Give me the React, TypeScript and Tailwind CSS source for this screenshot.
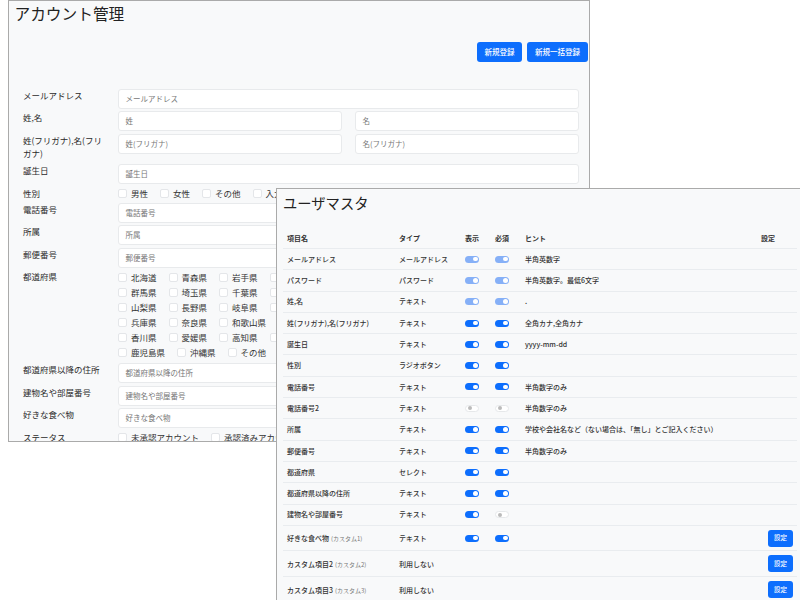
import React from 'react';

const jp = { fontFamily: '"Noto Sans CJK JP", "Noto Sans", sans-serif' };

const prefectures = [
  ['北海道', '青森県', '岩手県', '宮城県', '秋田県', '山形県', '福島県', '茨城県', '栃木県'],
  ['群馬県', '埼玉県', '千葉県', '東京都', '神奈川県', '新潟県', '富山県', '石川県', '福井県'],
  ['山梨県', '長野県', '岐阜県', '静岡県', '愛知県', '三重県', '滋賀県', '京都府', '大阪府'],
  ['兵庫県', '奈良県', '和歌山県', '鳥取県', '島根県', '岡山県', '広島県', '山口県', '徳島県'],
  ['香川県', '愛媛県', '高知県', '福岡県', '佐賀県', '長崎県', '熊本県', '大分県', '宮崎県'],
  ['鹿児島県', '沖縄県', 'その他'],
];

type Sw = 'on' | 'locked' | 'off' | null;

interface MasterRow {
  name: string;
  custom?: string;
  type: string;
  show: Sw;
  required: Sw;
  hint?: string;
  action?: boolean;
}

const masterRows: MasterRow[] = [
  { name: 'メールアドレス', type: 'メールアドレス', show: 'locked', required: 'locked', hint: '半角英数字' },
  { name: 'パスワード', type: 'パスワード', show: 'locked', required: 'locked', hint: '半角英数字。最低6文字' },
  { name: '姓,名', type: 'テキスト', show: 'locked', required: 'locked', hint: '.' },
  { name: '姓(フリガナ),名(フリガナ)', type: 'テキスト', show: 'on', required: 'on', hint: '全角カナ,全角カナ' },
  { name: '誕生日', type: 'テキスト', show: 'on', required: 'on', hint: 'yyyy-mm-dd' },
  { name: '性別', type: 'ラジオボタン', show: 'on', required: 'on' },
  { name: '電話番号', type: 'テキスト', show: 'on', required: 'on', hint: '半角数字のみ' },
  { name: '電話番号2', type: 'テキスト', show: 'off', required: 'off', hint: '半角数字のみ' },
  { name: '所属', type: 'テキスト', show: 'on', required: 'on', hint: '学校や会社名など（ない場合は、「無し」とご記入ください）' },
  { name: '郵便番号', type: 'テキスト', show: 'on', required: 'on', hint: '半角数字のみ' },
  { name: '都道府県', type: 'セレクト', show: 'on', required: 'on' },
  { name: '都道府県以降の住所', type: 'テキスト', show: 'on', required: 'on' },
  { name: '建物名や部屋番号', type: 'テキスト', show: 'on', required: 'off' },
  { name: '好きな食べ物', custom: '(カスタム1)', type: 'テキスト', show: 'on', required: 'on', action: true },
  { name: 'カスタム項目2', custom: '(カスタム2)', type: '利用しない', show: null, required: null, action: true },
  { name: 'カスタム項目3', custom: '(カスタム3)', type: '利用しない', show: null, required: null, action: true },
];

const Field = ({ placeholder, className = '' }: { placeholder: string; className?: string }) => (
  <div className={`h-[20px] flex-1 flex items-center rounded-[3px] border border-[#e8eaec] bg-white pl-[6.5px] text-[7.5px] text-[#777] ${className}`}>
    {placeholder}
  </div>
);

const Check = ({ label }: { label: string }) => (
  <span className="mr-[12px] flex shrink-0 items-center gap-[4px] whitespace-nowrap">
    <span className="h-[9px] w-[9px] rounded-[2px] border border-[#e4e6e9] bg-white" />
    {label}
  </span>
);

const Row = ({ label, children, className = '' }: { label: string; children: React.ReactNode; className?: string }) => (
  <div className={`mb-[2.5px] flex ${className}`}>
    <div className="w-[95px] shrink-0 pr-[8px] text-[8.5px] leading-[13px] text-[#2b2b2b]">{label}</div>
    <div className="flex flex-1 gap-[13px]">{children}</div>
  </div>
);

const Toggle = ({ state }: { state: Sw }) => {
  if (!state) return null;
  if (state === 'off') {
    return (
      <span className="flex h-[7px] w-[14px] items-center rounded-full border border-[#e6e8ea] bg-white pl-[2px]">
        <span className="h-[4px] w-[4px] rounded-full bg-[#bbb]" />
      </span>
    );
  }
  return (
    <span className={`flex h-[7px] w-[14px] items-center justify-end rounded-full pr-[1.5px] ${state === 'on' ? 'bg-[#0d6efd]' : 'bg-[#86b0f7]'}`}>
      <span className="h-[4.5px] w-[4.5px] rounded-full bg-white" />
    </span>
  );
};

const gridCols = 'grid grid-cols-[112px_66px_30px_30px_236px_36px] items-center pl-[4px]';

export default function App() {
  return (
    <div className="relative h-[600px] w-[800px] overflow-hidden bg-white text-[#333]" style={jp}>
      {/* 後ろのウィンドウ */}
      <section className="absolute left-[8px] top-0 h-[442px] w-[582px] overflow-hidden border border-[#aaa] bg-[#f8f9fa] pl-[14px] pr-[10px]">
        <h1 className="-ml-[8.5px] mt-[1.5px] h-[22px] text-[15.7px] leading-[22px] text-[#222]">アカウント管理</h1>
        <div className="-mr-[9px] mt-[17.5px] flex justify-end gap-[5px]">
          <button className="h-[20px] w-[45px] rounded-[3px] bg-[#0d6efd] text-[7.5px] font-medium text-white">新規登録</button>
          <button className="h-[20px] w-[61px] rounded-[3px] bg-[#0d6efd] text-[7.5px] font-medium text-white">新規一括登録</button>
        </div>
        <div className="mt-[26.5px]">
          <Row label="メールアドレス"><Field placeholder="メールアドレス" /></Row>
          <Row label="姓,名"><Field placeholder="姓" /><Field placeholder="名" /></Row>
          <Row label="姓(フリガナ),名(フリガナ)" className="mb-[2px] h-[28px]"><Field placeholder="姓(フリガナ)" /><Field placeholder="名(フリガナ)" /></Row>
          <Row label="誕生日"><Field placeholder="誕生日" /></Row>
          <Row label="性別" className="h-[14px] items-center">
            <div className="flex text-[8.5px]">
              <Check label="男性" /><Check label="女性" /><Check label="その他" /><Check label="入力しない" />
            </div>
          </Row>
          <Row label="電話番号" className="mt-[1px]"><Field placeholder="電話番号" /></Row>
          <Row label="所属"><Field placeholder="所属" /></Row>
          <Row label="郵便番号"><Field placeholder="郵便番号" /></Row>
          <Row label="都道府県" className="mb-[3px]">
            <div className="flex flex-col text-[8.5px] leading-[15px]">
              {prefectures.map((line, i) => (
                <div key={i} className="flex h-[15px]">
                  {line.map((p) => <Check key={p} label={p} />)}
                </div>
              ))}
            </div>
          </Row>
          <Row label="都道府県以降の住所"><Field placeholder="都道府県以降の住所" /></Row>
          <Row label="建物名や部屋番号"><Field placeholder="建物名や部屋番号" /></Row>
          <Row label="好きな食べ物"><Field placeholder="好きな食べ物" /></Row>
          <Row label="ステータス" className="h-[14px]">
            <div className="flex text-[8.5px]">
              <Check label="未承認アカウント" /><Check label="承認済みアカウント" />
            </div>
          </Row>
        </div>
      </section>

      {/* 前のウィンドウ */}
      <section className="absolute left-[276px] top-[188px] h-[420px] w-[530px] border border-[#aaa] bg-[#f8f9fa] pl-[6px]">
        <h2 className="mt-[3px] h-[22px] text-[14.3px] leading-[22px] text-[#222]">ユーザマスタ</h2>
        <div className="w-[514px] text-[7px] font-medium text-[#333]">
          <div className={`${gridCols} mt-[14px] h-[21px] border-b-[1.5px] border-[#e9ecef] font-bold`}>
            <span>項目名</span>
            <span>タイプ</span>
            <span>表示</span>
            <span>必須</span>
            <span>ヒント</span>
            <span>設定</span>
          </div>
          {masterRows.map((r, i) => (
            <div
              key={r.name}
              className={`${gridCols} border-b-[1.5px] border-[#e9ecef] ${r.action ? (i === 13 ? 'h-[25.5px]' : 'h-[26px]') : 'h-[21.3px]'}`}
            >
              <span className="whitespace-nowrap">
                {r.name}
                {r.custom && <span className="ml-[2px] text-[6px] font-normal text-[#777]">{r.custom}</span>}
              </span>
              <span>{r.type}</span>
              <span><Toggle state={r.show} /></span>
              <span><Toggle state={r.required} /></span>
              <span className="whitespace-nowrap">{r.hint}</span>
              <span className="flex justify-start pl-[7px]">
                {r.action && <button className="h-[17px] w-[25px] shrink-0 rounded-[3px] bg-[#0d6efd] text-[6.5px] font-medium text-white">設定</button>}
              </span>
            </div>
          ))}
        </div>
      </section>
    </div>
  );
}
